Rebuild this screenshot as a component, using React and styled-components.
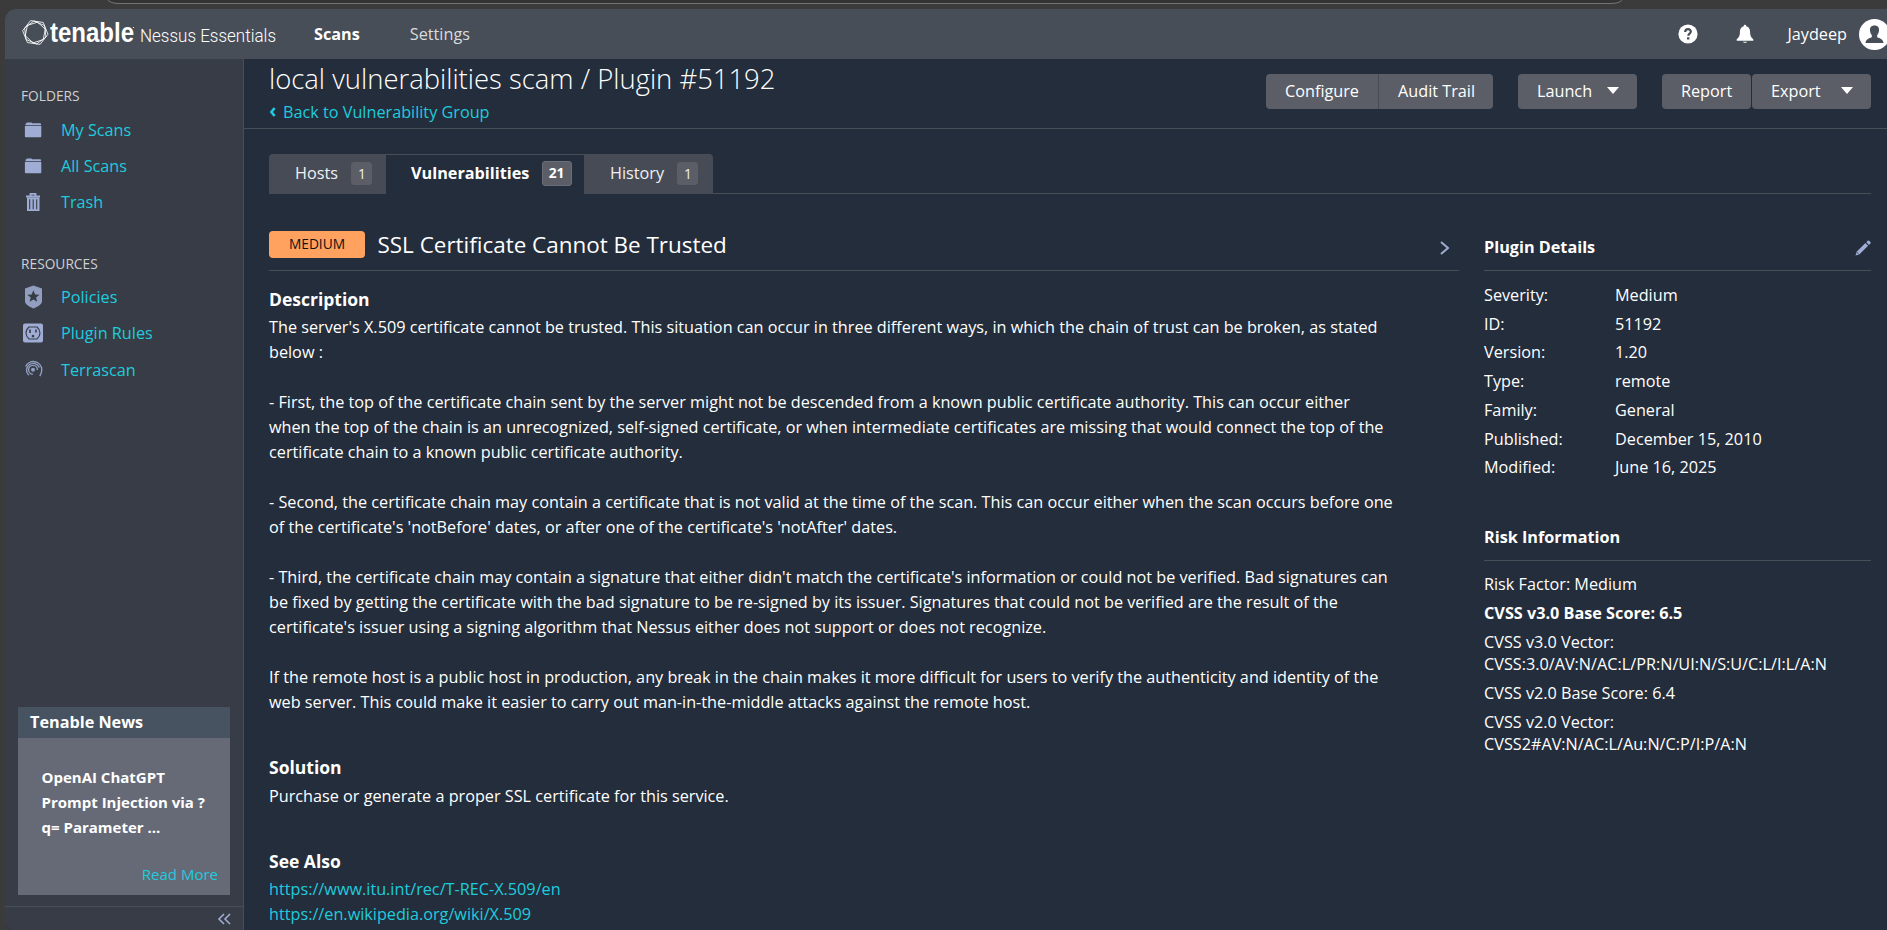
import React from "react";
import styled, { createGlobalStyle } from "styled-components";

const c = {
  chrome: "#3b3b3b",
  header: "#474e57",
  sidebar: "#373c46",
  main: "#242d3b",
  line: "#474e57",
  link: "#1fcbde",
  icon: "#9facd4",
  button: "#5b5e67",
  tab: "#474b56",
};

const GlobalStyle = createGlobalStyle`
  * { box-sizing: border-box; }
  body {
    margin: 0;
    height: 930px;
    overflow: hidden;
    background: ${c.chrome};
    color: #fff;
    font: 400 16.23px/25px "Open Sans", "Noto Sans", sans-serif;
  }
  #root { height: 930px; }
  a { color: ${c.link}; text-decoration: none; }
  h1, h2, h3, p, ul, dl, dd { margin: 0; padding: 0; font-size: inherit; font-weight: inherit; }
  ul { list-style: none; }
  svg { display: block; flex: none; }
`;

const Frame = styled.div`
  height: 930px;
  display: flex;
  flex-direction: column;
  overflow: hidden;
`;

const AddressEdge = styled.div`
  height: 4px;
  margin: 0 265px 5px 108px;
  width: 1514px;
  background: #333;
  border: 1px solid #747474;
  border-top: 0;
  border-radius: 0 0 11px 11px / 0 0 4px 4px;
  flex: none;
`;

const Window = styled.div`
  flex: 1;
  min-height: 0;
  margin-left: 5px;
  display: flex;
  flex-direction: column;
  overflow: hidden;
  background: ${c.main};
  border-radius: 11px 0 0 8px;
`;

const TopBar = styled.header`
  height: 50px;
  flex: none;
  display: flex;
  align-items: center;
  background: ${c.header};
`;

const Logo = styled.svg`
  margin-left: 15px;
  width: 260px;
  height: 50px;
`;

const TopLink = styled.a`
  color: ${(p) => (p.$active ? "#fff" : "#d9dbdd")};
  font-weight: ${(p) => (p.$active ? 700 : 400)};
  margin-left: ${(p) => (p.$active ? 34 : 50)}px;
  padding-top: 1px;
`;

const UserArea = styled.div`
  margin-left: auto;
  display: flex;
  align-items: center;
  gap: 12px;
  margin-right: -3px;
`;

const BellSlot = styled.span`
  margin: 0 21px 0 26px;
`;

const UserName = styled.span`
  padding-top: 1px;
`;

const Body = styled.div`
  flex: 1;
  min-height: 0;
  display: flex;
`;

const Sidebar = styled.aside`
  width: 239px;
  flex: none;
  display: flex;
  flex-direction: column;
  background: ${c.sidebar};
  border-right: 1px solid ${c.line};
`;

const MenuTitle = styled.h3`
  font-size: 13.75px;
  line-height: 20px;
  color: #cfd0d2;
  padding-left: 16px;
  margin: ${(p) => p.$top}px 0 ${(p) => p.$bottom}px;
`;

const MenuItem = styled.li`
  height: 36.1px;
  display: flex;
  align-items: center;
`;

const MenuIcon = styled.span`
  width: 56px;
  padding: 0 0 1.4px 18px;
  display: flex;
`;

const News = styled.section`
  margin: auto 13px 11px 13px;
  height: 188px;
  background: #666a76;
  display: flex;
  flex-direction: column;
`;

const NewsTitle = styled.h3`
  height: 31px;
  padding: 2px 12px 0;
  font-weight: 700;
  line-height: 26px;
  background: #475360;
`;

const NewsText = styled.p`
  padding: 27px 10px 0 23.5px;
  font-size: 15px;
  font-weight: 700;
  white-space: pre-line;
`;

const NewsMore = styled.a`
  margin: auto 12px 9px auto;
  font-size: 15px;
  line-height: 23px;
`;

const Collapse = styled.div`
  height: 24px;
  border-top: 1px solid ${c.line};
  display: flex;
  justify-content: flex-end;
  padding: 6px 12px 0 0;
`;

const Main = styled.main`
  flex: 1;
  min-width: 0;
  display: flex;
  flex-direction: column;
`;

const PageHead = styled.div`
  height: 70px;
  flex: none;
  display: flex;
  justify-content: space-between;
  padding: 0 16px 0 25px;
  border-bottom: 1px solid ${c.line};
`;

const PageTitle = styled.h1`
  font-size: 27.45px;
  font-weight: 300;
  line-height: 40px;
`;

const BackLink = styled.a`
  display: flex;
  align-items: center;
  gap: 7px;
  line-height: 27px;
`;

const Actions = styled.div`
  display: flex;
  padding-top: 15px;
`;

const ActionButton = styled.button`
  height: 35px;
  width: ${(p) => p.$w}px;
  margin-left: ${(p) => p.$gap || 0}px;
  border: 0;
  border-right: ${(p) => (p.$divide ? "1px solid #474b56" : 0)};
  border-radius: ${(p) => p.$radius || "4px"};
  background: ${c.button};
  color: #fff;
  font: inherit;
  white-space: nowrap;
  padding: 0 18px 0 19px;
  display: flex;
  align-items: center;
  justify-content: ${(p) => (p.$menu ? "space-between" : "flex-start")};
`;

const Caret = styled.span`
  border: 6px solid transparent;
  border-top: 7px solid #fff;
  border-bottom: 0;
  margin-bottom: 3px;
`;

const Tabs = styled.div`
  display: flex;
  height: 40px;
  margin: 25px 16px 0 25px;
  border-bottom: 1px solid ${c.line};
  flex: none;
`;

const Tab = styled.div`
  height: 40px;
  width: ${(p) => p.$w}px;
  padding: 0 0 2px ${(p) => (p.$active ? 25 : 26)}px;
  display: flex;
  align-items: center;
  background: ${(p) => (p.$active ? c.main : c.tab)};
  border-top: 1px solid ${c.line};
  border-radius: ${(p) => p.$radius || 0};
  font-weight: ${(p) => (p.$active ? 700 : 400)};
  color: ${(p) => (p.$active ? "#fff" : "#f0f0f1")};
`;

const Count = styled.span`
  margin-left: ${(p) => (p.$active ? 12.3 : 13.4)}px;
  width: ${(p) => (p.$active ? 30 : 21)}px;
  height: ${(p) => (p.$active ? 25 : 23)}px;
  line-height: ${(p) => (p.$active ? 22 : 21)}px;
  text-align: center;
  font-size: 13.75px;
  border-radius: 3px;
  border: 1px solid ${(p) => (p.$active ? "#6b6e77" : c.button)};
  background: ${c.button};
`;

const Columns = styled.div`
  display: flex;
  justify-content: space-between;
  padding: 32px 16px 0 25px;
`;

const Article = styled.article`
  width: 1190px;
`;

const FindingHead = styled.div`
  height: 45px;
  display: flex;
  align-items: flex-start;
  border-bottom: 1px solid ${c.line};
`;

const Severity = styled.span`
  width: 96px;
  height: 27px;
  margin: 5px 12.5px 0 0;
  border-radius: 4px;
  background: #ffa15f;
  color: #111;
  font-size: 13.75px;
  line-height: 26px;
  text-align: center;
`;

const FindingTitle = styled.h2`
  flex: 1;
  font-size: 22.45px;
  line-height: 37px;
`;

const NextArrow = styled.span`
  padding: 15px 9px 0 0;
`;

const SectionTitle = styled.h3`
  font-size: 17.5px;
  font-weight: 700;
  line-height: 27px;
  margin-top: ${(p) => p.$top}px;
  margin-bottom: ${(p) => p.$bottom || 0}px;
`;

const Text = styled.p`
  white-space: pre;
`;

const Aside = styled.aside`
  width: 387px;
`;

const AsideHead = styled.div`
  height: ${(p) => p.$h}px;
  display: flex;
  justify-content: space-between;
  align-items: flex-end;
  padding-bottom: 10px;
  border-bottom: 1px solid ${c.line};
  font-weight: 700;
`;

const Details = styled.dl`
  padding-top: 10px;
`;

const Detail = styled.div`
  display: grid;
  grid-template-columns: 131px 1fr;
  line-height: 28.7px;
`;

const RiskList = styled.ul`
  padding-top: 12px;
`;

const Risk = styled.li`
  line-height: 22px;
  padding-bottom: 7px;
  font-weight: ${(p) => (p.$bold ? 700 : 400)};
  white-space: pre;
`;

const hexagon = (radius, turn) =>
  [0, 1, 2, 3, 4, 5]
    .map((k) => {
      const a = ((turn + k * 60) * Math.PI) / 180;
      return `${(35.3 + radius * Math.cos(a)).toFixed(2)},${(23.5 + radius * Math.sin(a)).toFixed(2)}`;
    })
    .join(" ");

const TenableLogo = () => (
  <Logo viewBox="20 0 260 50">
    <g fill="none" stroke="#fff" strokeWidth=".85">
      <polygon points={hexagon(12.8, 8)} />
      <polygon points={hexagon(11.6, 23)} />
      <polygon points={hexagon(10.6, 42)} />
    </g>
    <text x="50" y="33" fill="#fff" fontFamily="Liberation Sans, sans-serif" fontSize="27" fontWeight="700" textLength="84" lengthAdjust="spacingAndGlyphs">tenable</text>
    <circle cx="133.500" cy="18.500" r=".6" fill="#fff" />
    <text x="140" y="33" fill="#fff" fontFamily="Roboto, sans-serif" fontSize="18.700" fontWeight="300" textLength="136" lengthAdjust="spacingAndGlyphs">Nessus Essentials</text>
  </Logo>
);

const HelpIcon = () => (
  <svg width="20" height="20" viewBox="0 0 20 20">
    <circle cx="10" cy="10" r="9.600" fill="#fff" />
    <path d="M7.200 8c0-3.800 5.800-3.600 5.600-.2-.1 1.900-2.500 1.900-2.500 4" fill="none" stroke="#474e57" strokeWidth="2.200" />
    <rect x="9" y="13.300" width="2.400" height="2.200" fill="#474e57" />
  </svg>
);

const BellIcon = () => (
  <svg width="18" height="20" viewBox="0 0 18 20" fill="#fff">
    <path d="M9 .8c.9 0 1.300.7 1.300 1.500 2.800.8 3.800 3 3.800 5.700 0 3.500.6 5 3.200 7.200v1.600H.7v-1.600C3.300 13 3.900 11.500 3.900 8c0-2.700 1-4.900 3.800-5.700C7.700 1.500 8.100.8 9 .8Z" />
    <path d="M7 17.700h4c-.3 1.300-3.700 1.300-4 0Z" />
  </svg>
);

const Avatar = () => (
  <svg width="31" height="31" viewBox="0 0 31 31">
    <circle cx="15.500" cy="15.500" r="15.500" fill="#fff" />
    <path d="M15.500 6.500c3.500 0 4.800 2.200 4.500 5.200-.2 2-.9 3.200-1.800 4.300v2.200c2.700 1.200 6.100 1.900 6.300 5.800h-18c.2-3.900 3.600-4.600 6.300-5.800V16c-.9-1.100-1.600-2.300-1.800-4.300-.3-3 1-5.200 4.500-5.200Z" fill="#474e57" />
  </svg>
);

const FolderIcon = () => (
  <svg width="20" height="20" viewBox="0 0 20 20" fill={c.icon}>
    <path d="M2.500 5.300V4q0-.8.900-.8L4 2.600h4.500l.7.600h8q.8 0 .8.800v1.300Z" />
    <path d="M1.900 6.100h16.400v10.100q0 1-1 1H2.900q-1 0-1-1Z" />
  </svg>
);

const TrashIcon = () => (
  <svg width="20" height="20" viewBox="0 0 20 20">
    <path d="M7.500 4V1.800h5V4M3 4.500h14" fill="none" stroke={c.icon} strokeWidth="1.800" />
    <path d="M4 5.500h12.500V19H4Z" fill={c.icon} />
    <path d="M6.700 7.200v10M10.200 7.200v10M13.700 7.200v10" stroke={c.sidebar} strokeWidth="1.100" />
  </svg>
);

const ShieldIcon = () => (
  <svg width="20" height="24" viewBox="0 0 20 24">
    <path d="M10.400.6 19 3.500v12.800q0 4-8.600 7.200Q2 20.300 2 16.300V3.500Z" fill="#919ec0" />
    <path d="m10.400 5.300 1.700 4.100 4.400.3-3.400 2.800 1.100 4.300-3.800-2.400-3.800 2.400 1.100-4.300-3.400-2.800 4.400-.3Z" fill={c.sidebar} />
  </svg>
);

const PlugIcon = () => (
  <svg width="20" height="20" viewBox="0 0 20 20">
    <rect y=".5" width="20" height="19" rx="2" fill={c.icon} />
    <path d="M6 4h8q3 2.500 3 6t-3 6H6Q3 13.500 3 10t3-6Z" fill="none" stroke={c.sidebar} strokeWidth="1.100" />
    <path d="M6.200 6.500h1.600v3.500H6.200ZM12.200 6.500h1.600v3h-1.600ZM8.800 12.500q1.200-1.500 2.400 0V14.300H8.800Z" fill={c.sidebar} />
  </svg>
);

const TerrascanIcon = () => (
  <svg width="20" height="20" viewBox="0 0 20 20" fill="none" stroke="#919ec0" strokeWidth="1.400">
    <circle cx="10" cy="10.800" r="2" fill="#919ec0" stroke="none" />
    <path d="M9.800 15.200a4.400 4.400 0 1 1 4.600-4.200" />
    <path d="M6 16.300A6.700 6.700 0 1 1 16.400 8.500" />
    <path d="M2.600 7.500A8.500 8.500 0 0 1 18.800 10.500q0 3.500-2 6.500" />
  </svg>
);

const PencilIcon = () => (
  <svg width="16" height="20" viewBox="0 0 16 20" fill={c.icon}>
    <path d="M.5 15.500 1.600 11.800 10.400 3l2.700 2.700-8.800 8.700ZM11.300 2.200 12.700.8q.8-.7 1.500 0l1.200 1.200q.7.700 0 1.500L14 4.900Z" />
    <path d="m1.600 12 2.400 2.500" stroke={c.main} strokeWidth=".7" />
  </svg>
);

const Chevron = ({ w, h, d, width = 2, color = c.icon }) => (
  <svg width={w} height={h} viewBox={`0 0 ${w} ${h}`}>
    <path d={d} fill="none" stroke={color} strokeWidth={width} />
  </svg>
);

const folders = [
  ["My Scans", FolderIcon],
  ["All Scans", FolderIcon],
  ["Trash", TrashIcon],
];

const resources = [
  ["Policies", ShieldIcon],
  ["Plugin Rules", PlugIcon],
  ["Terrascan", TerrascanIcon],
];

const details = [
  ["Severity:", "Medium"],
  ["ID:", "51192"],
  ["Version:", "1.20"],
  ["Type:", "remote"],
  ["Family:", "General"],
  ["Published:", "December 15, 2010"],
  ["Modified:", "June 16, 2025"],
];

const risks = [
  ["Risk Factor: Medium"],
  ["CVSS v3.0 Base Score: 6.5", true],
  ["CVSS v3.0 Vector:\nCVSS:3.0/AV:N/AC:L/PR:N/UI:N/S:U/C:L/I:L/A:N"],
  ["CVSS v2.0 Base Score: 6.4"],
  ["CVSS v2.0 Vector:\nCVSS2#AV:N/AC:L/Au:N/C:P/I:P/A:N"],
];

const description = `The server's X.509 certificate cannot be trusted. This situation can occur in three different ways, in which the chain of trust can be broken, as stated
below :

- First, the top of the certificate chain sent by the server might not be descended from a known public certificate authority. This can occur either
when the top of the chain is an unrecognized, self-signed certificate, or when intermediate certificates are missing that would connect the top of the
certificate chain to a known public certificate authority.

- Second, the certificate chain may contain a certificate that is not valid at the time of the scan. This can occur either when the scan occurs before one
of the certificate's 'notBefore' dates, or after one of the certificate's 'notAfter' dates.

- Third, the certificate chain may contain a signature that either didn't match the certificate's information or could not be verified. Bad signatures can
be fixed by getting the certificate with the bad signature to be re-signed by its issuer. Signatures that could not be verified are the result of the
certificate's issuer using a signing algorithm that Nessus either does not support or does not recognize.

If the remote host is a public host in production, any break in the chain makes it more difficult for users to verify the authenticity and identity of the
web server. This could make it easier to carry out man-in-the-middle attacks against the remote host.`;

const Menu = ({ items }) => (
  <ul>
    {items.map(([label, Icon]) => (
      <MenuItem key={label}>
        <MenuIcon><Icon /></MenuIcon>
        <a>{label}</a>
      </MenuItem>
    ))}
  </ul>
);

export default function App() {
  return (
    <Frame>
      <GlobalStyle />
      <AddressEdge />
      <Window>
        <TopBar>
          <TenableLogo />
          <TopLink $active>Scans</TopLink>
          <TopLink>Settings</TopLink>
          <UserArea>
            <HelpIcon />
            <BellSlot><BellIcon /></BellSlot>
            <UserName>Jaydeep</UserName>
            <Avatar />
          </UserArea>
        </TopBar>
        <Body>
          <Sidebar>
            <MenuTitle $top={26.5} $bottom={7}>FOLDERS</MenuTitle>
            <Menu items={folders} />
            <MenuTitle $top={33} $bottom={6}>RESOURCES</MenuTitle>
            <Menu items={resources} />
            <News>
              <NewsTitle>Tenable News</NewsTitle>
              <NewsText>{"OpenAI ChatGPT\nPrompt Injection via ?\nq= Parameter ..."}</NewsText>
              <NewsMore>Read More</NewsMore>
            </News>
            <Collapse>
              <Chevron w={14} h={12} d="M7 1 2 6l5 5M13 1 8 6l5 5" width={1.6} />
            </Collapse>
          </Sidebar>
          <Main>
            <PageHead>
              <div>
                <PageTitle>local vulnerabilities scam / Plugin #51192</PageTitle>
                <BackLink>
                  <Chevron w={7} h={11} d="M5.600 1 2.400 5l3.200 4" width={2.6} color={c.link} />
                  Back to Vulnerability Group
                </BackLink>
              </div>
              <Actions>
                <ActionButton $w={113} $divide $radius="4px 0 0 4px">Configure</ActionButton>
                <ActionButton $w={114} $radius="0 4px 4px 0">Audit Trail</ActionButton>
                <ActionButton $w={119} $gap={25} $menu>Launch<Caret /></ActionButton>
                <ActionButton $w={89} $gap={25}>Report</ActionButton>
                <ActionButton $w={119} $gap={1} $menu>Export<Caret /></ActionButton>
              </Actions>
            </PageHead>
            <Tabs>
              <Tab $w={117} $radius="4px 0 0 0">Hosts<Count>1</Count></Tab>
              <Tab $w={198} $active>Vulnerabilities<Count $active>21</Count></Tab>
              <Tab $w={129} $radius="0 4px 0 0">History<Count>1</Count></Tab>
            </Tabs>
            <Columns>
              <Article>
                <FindingHead>
                  <Severity>MEDIUM</Severity>
                  <FindingTitle>SSL Certificate Cannot Be Trusted</FindingTitle>
                  <NextArrow>
                    <Chevron w={10} h={14} d="M1 1 8 7 1 13" width={2} />
                  </NextArrow>
                </FindingHead>
                <SectionTitle $top={15} $bottom={2}>Description</SectionTitle>
                <Text>{description}</Text>
                <SectionTitle $top={39} $bottom={3}>Solution</SectionTitle>
                <Text>Purchase or generate a proper SSL certificate for this service.</Text>
                <SectionTitle $top={39} $bottom={2}>See Also</SectionTitle>
                <Text><a>https://www.itu.int/rec/T-REC-X.509/en</a>{"\n"}<a>https://en.wikipedia.org/wiki/X.509</a></Text>
              </Article>
              <Aside>
                <AsideHead $h={45}>
                  <span>Plugin Details</span>
                  <PencilIcon />
                </AsideHead>
                <Details>
                  {details.map(([k, v]) => (
                    <Detail key={k}><dt>{k}</dt><dd>{v}</dd></Detail>
                  ))}
                </Details>
                <AsideHead $h={79}>Risk Information</AsideHead>
                <RiskList>
                  {risks.map(([t, bold]) => <Risk key={t} $bold={bold}>{t}</Risk>)}
                </RiskList>
              </Aside>
            </Columns>
          </Main>
        </Body>
      </Window>
    </Frame>
  );
}
